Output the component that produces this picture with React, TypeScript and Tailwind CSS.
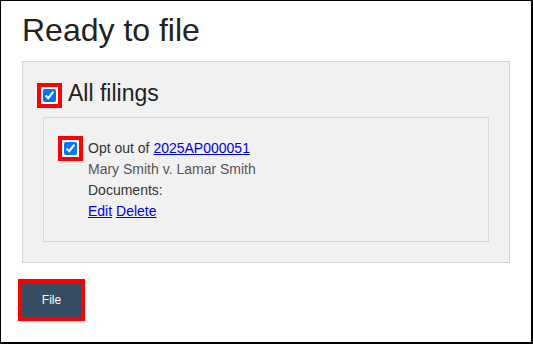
import React from "react";

function Check() {
  return (
    <span className="flex shrink-0 border-4 border-[#ff0000] bg-white p-[2px]">
      <input type="checkbox" checked readOnly className="m-0 block h-[13px] w-[13px]" />
    </span>
  );
}

export default function App() {
  return (
    <div className="h-[344px] w-[533px] border-b-2 border-l border-r-2 border-t border-black bg-white px-[21px] font-['Liberation_Sans',Arial,sans-serif]">
      <h1 className="mt-[11px] text-[32px] leading-[37px] text-[#222]">Ready to file</h1>
      <div className="mt-[12px] border border-[#d4d4d4] bg-[#f1f1f1]">
        <div className="flex h-[45px] items-start pl-[14px] pt-[17px]">
          <div className="mt-[4px] flex">
            <Check />
          </div>
          <span className="ml-[6px] text-[23px] leading-[28px] text-[#222]">All filings</span>
        </div>
        <div className="mx-[20px] mb-[20px] mt-[10px] border border-[#d7d7d7] bg-[#f1f1f1] pb-[19px] pl-[14px] pt-[18px]">
          <div className="flex items-start">
            <Check />
            <div className="ml-[5px] mt-[2px] text-[14px] leading-[21px] text-[#333]">
              <div>
                Opt out of{" "}
                <a href="#" className="text-[#0000ee] underline">
                  2025AP000051
                </a>
              </div>
              <div className="text-[#555]">Mary Smith v. Lamar Smith</div>
              <div>Documents:</div>
              <div>
                <a href="#" className="text-[#0000ee] underline">
                  Edit
                </a>{" "}
                <a href="#" className="text-[#0000ee] underline">
                  Delete
                </a>
              </div>
            </div>
          </div>
        </div>
      </div>
      <button className="mt-[20px] block h-[34px] w-[59px] bg-[#354c63] text-[12px] text-white shadow-[0_3px_5px_rgba(0,0,0,0.15)] outline-4 outline-[#ff0000]">
        File
      </button>
    </div>
  );
}
